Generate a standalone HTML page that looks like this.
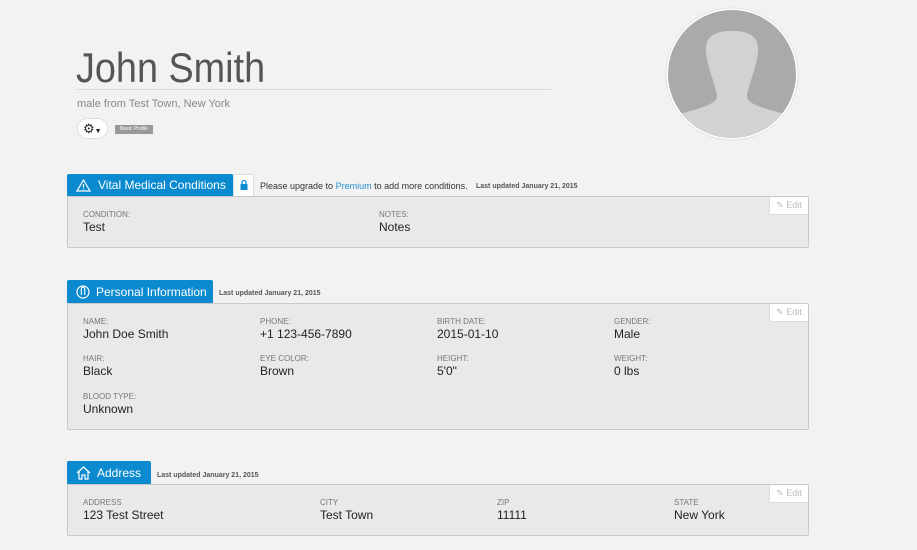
<!DOCTYPE html>
<html><head><meta charset="utf-8"><style>
*{box-sizing:border-box;margin:0;padding:0}
body{width:917px;height:550px;background:#f2f2f2;font-family:"Liberation Sans",sans-serif;position:relative;overflow:hidden;color:#222}
.abs{position:absolute}
h1{position:absolute;left:76px;top:44px;font-size:42px;font-weight:normal;color:#555;font-family:"Liberation Sans",sans-serif;white-space:nowrap;transform:scaleX(0.9);transform-origin:left}
.tab{position:absolute;left:67px;background:#0b8ad0;color:#fff;font-size:12px;display:flex;align-items:center;padding-left:9px;border-radius:2px 2px 0 0;white-space:nowrap}
.box{position:absolute;left:67px;width:742px;background:#e9e9e9;border:1px solid #c9c9c9;border-radius:2px}
.lbl{position:absolute;font-size:8px;color:#777;text-transform:uppercase}
.val{position:absolute;font-size:12px;color:#222}
.edit{position:absolute;right:0;top:0;width:39px;height:18px;background:#fff;border-left:1px solid #ddd;border-bottom:1px solid #ddd;border-radius:0 0 0 2px;font-size:9px;color:#bbb;display:flex;align-items:center;justify-content:center;gap:3px}
.upd{position:absolute;font-size:7px;color:#555;font-weight:bold}
</style></head><body>
<h1>John Smith</h1>
<div class="abs" style="left:77px;top:89px;width:474px;height:1px;background:#d8d8d8"></div>
<div class="abs" style="left:77px;top:98px;font-size:11px;color:#888">male from Test Town, New York</div>
<div class="abs" style="left:77px;top:118px;width:31px;height:21px;border-radius:11px;background:#fff;border:1px solid #ddd;font-size:13px;line-height:19px;padding-left:5px;color:#222">⚙<span style="font-size:7px">▼</span></div>
<div class="abs" style="left:115px;top:125px;width:38px;height:9px;background:#999;color:#fff;font-size:5px;line-height:9px;text-align:center">Basic Profile</div>
<svg class="abs" style="left:665px;top:7px" width="134" height="134" viewBox="0 0 134 134">
<defs><clipPath id="c"><circle cx="67" cy="67" r="64"/></clipPath></defs>
<circle cx="67" cy="67" r="66" fill="#fff" stroke="#e3e3e3"/>
<g clip-path="url(#c)"><rect width="134" height="134" fill="#a9aaab"/>
<path d="M67 24C52 24 40 28 41 44C42 60 50 76 52 88C53 96 40 100 18 106L0 112V134H134V112L116 106C94 100 81 96 82 88C84 76 92 60 93 44C94 28 82 24 67 24Z" fill="#d0d2d3"/></g></svg>

<div class="tab" style="top:174px;width:166px;height:22px"><svg width="15" height="13" viewBox="0 0 15 13" style="margin-right:7px"><path d="M7.5 1L14 12H1Z" fill="none" stroke="#fff" stroke-width="1.2"/><path d="M7.5 5v3.5M7.5 9.5v1" stroke="#fff" stroke-width="1.2"/></svg>Vital Medical Conditions</div>
<div class="abs" style="left:233px;top:174px;width:21px;height:23px;background:#fff;border:1px solid #ddd;border-bottom:none"><svg width="21" height="22" viewBox="0 0 21 22"><rect x="6.5" y="9" width="7" height="6" fill="#0b8ad0"/><path d="M8 9V7.5a2 2 0 0 1 4 0V9" fill="none" stroke="#0b8ad0" stroke-width="1.3"/></svg></div>
<div class="abs" style="left:260px;top:181px;font-size:9px;color:#333">Please upgrade to <span style="color:#2a8fd0">Premium</span> to add more conditions.</div>
<div class="upd" style="left:476px;top:183px">Last updated January 21, 2015</div>
<div class="box" style="top:196px;height:52px"><div class="edit">✎ Edit</div>
<div class="lbl" style="left:15px;top:13px">Condition:</div><div class="val" style="left:15px;top:23px">Test</div>
<div class="lbl" style="left:311px;top:13px">Notes:</div><div class="val" style="left:311px;top:23px">Notes</div></div>

<div class="tab" style="top:280px;width:146px;height:23px"><svg width="14" height="14" viewBox="0 0 14 14" style="margin-right:6px"><circle cx="7" cy="7" r="6" fill="none" stroke="#fff" stroke-width="1.2"/><path d="M5.3 4v6M8.7 4v6M5.3 4a1.7 1.7 0 0 1 3.4 0" fill="none" stroke="#fff" stroke-width="1.1"/></svg>Personal Information</div>
<div class="upd" style="left:219px;top:290px">Last updated January 21, 2015</div>
<div class="box" style="top:303px;height:127px"><div class="edit">✎ Edit</div>
<div class="lbl" style="left:15px;top:13px">Name:</div><div class="val" style="left:15px;top:23px">John Doe Smith</div>
<div class="lbl" style="left:192px;top:13px">Phone:</div><div class="val" style="left:192px;top:23px">+1 123-456-7890</div>
<div class="lbl" style="left:369px;top:13px">Birth Date:</div><div class="val" style="left:369px;top:23px">2015-01-10</div>
<div class="lbl" style="left:546px;top:13px">Gender:</div><div class="val" style="left:546px;top:23px">Male</div>
<div class="lbl" style="left:15px;top:50px">Hair:</div><div class="val" style="left:15px;top:60px">Black</div>
<div class="lbl" style="left:192px;top:50px">Eye Color:</div><div class="val" style="left:192px;top:60px">Brown</div>
<div class="lbl" style="left:369px;top:50px">Height:</div><div class="val" style="left:369px;top:60px">5'0"</div>
<div class="lbl" style="left:546px;top:50px">Weight:</div><div class="val" style="left:546px;top:60px">0 lbs</div>
<div class="lbl" style="left:15px;top:88px">Blood Type:</div><div class="val" style="left:15px;top:98px">Unknown</div></div>

<div class="tab" style="top:461px;width:84px;height:23px"><svg width="15" height="14" viewBox="0 0 15 14" style="margin-right:6px"><path d="M1 7L7.5 1L14 7M3 5.5V13H6V9H9V13H12V5.5" fill="none" stroke="#fff" stroke-width="1.2"/></svg>Address</div>
<div class="upd" style="left:157px;top:472px">Last updated January 21, 2015</div>
<div class="box" style="top:484px;height:52px"><div class="edit">✎ Edit</div>
<div class="lbl" style="left:15px;top:13px">Address</div><div class="val" style="left:15px;top:23px">123 Test Street</div>
<div class="lbl" style="left:252px;top:13px">City</div><div class="val" style="left:252px;top:23px">Test Town</div>
<div class="lbl" style="left:429px;top:13px">Zip</div><div class="val" style="left:429px;top:23px">11111</div>
<div class="lbl" style="left:606px;top:13px">State</div><div class="val" style="left:606px;top:23px">New York</div></div>
</body></html>
